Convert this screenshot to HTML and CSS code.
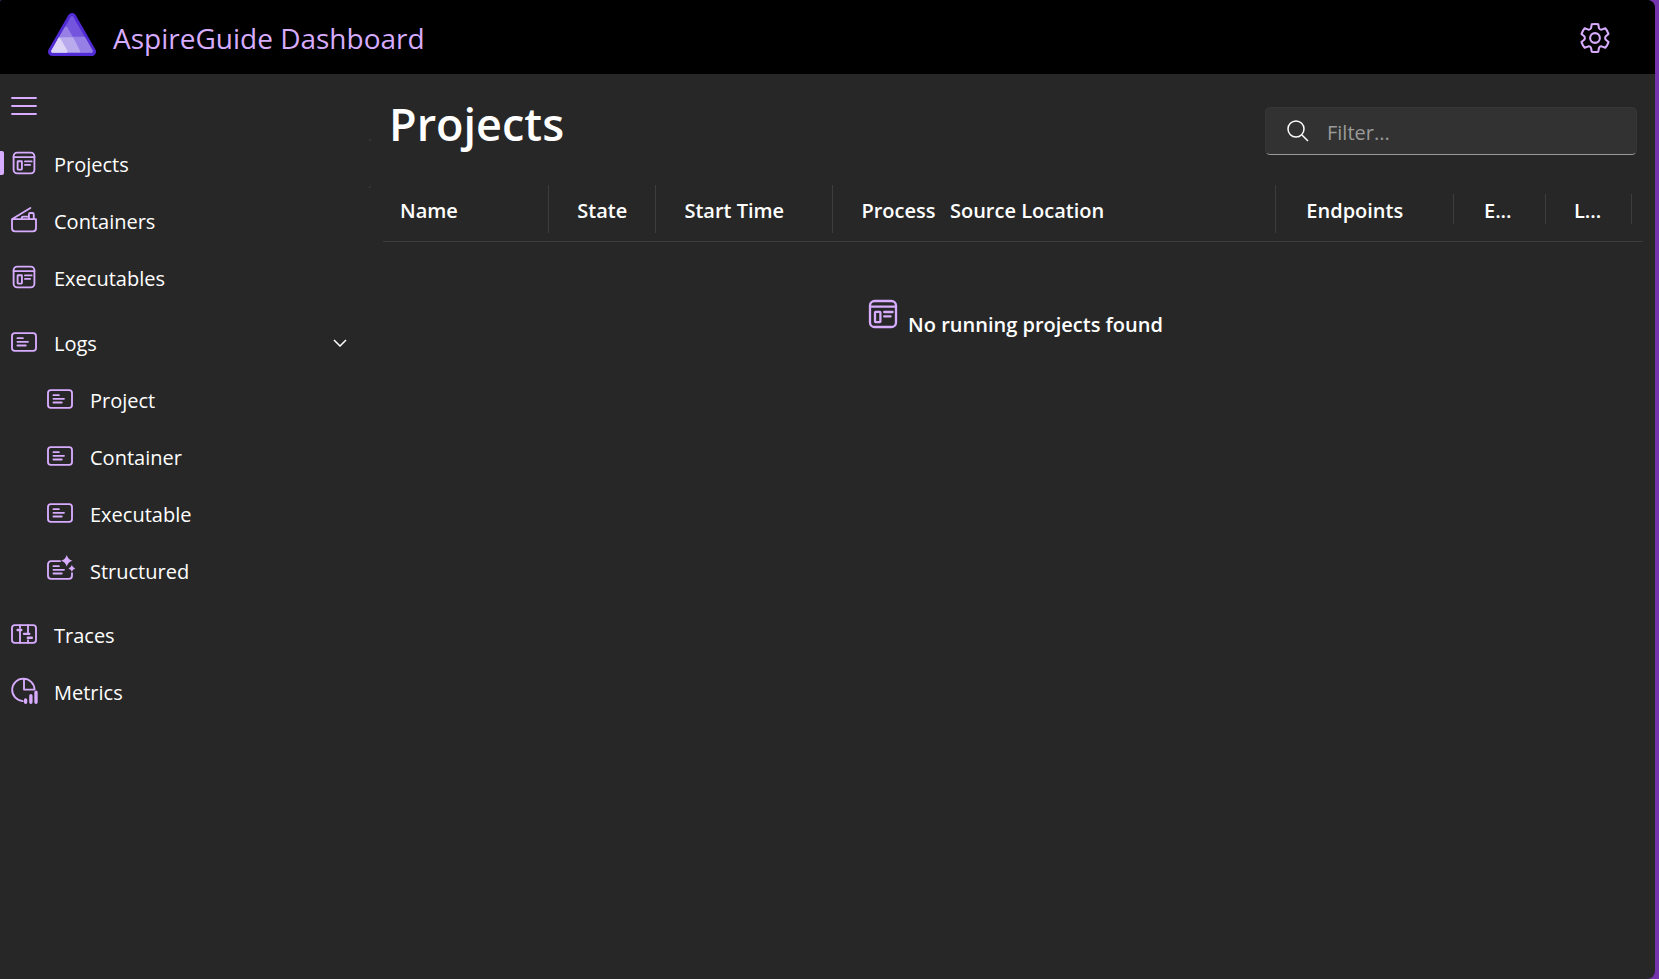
FILE: index.html
```html
<!DOCTYPE html>
<html lang="en">
<head>
<meta charset="utf-8">
<title>AspireGuide Dashboard</title>
<link rel="stylesheet" href="styles.css">
</head>
<body>
<svg class="sprite" aria-hidden="true">
  <symbol id="i-app" viewBox="0 0 20 20"><rect x="3.5" y="3.5" width="13" height="13" rx="2.3"/><path d="M3.5 6.3h13M10.6 9h4.2M10.6 11.2h3.2"/><rect x="6" y="8.9" width="2.7" height="5.2" rx=".3"/></symbol>
  <symbol id="i-box" viewBox="0 0 20 20"><path d="M2.5 9.5h15v5.7a1.9 1.9 0 0 1-1.9 1.9H4.4a1.9 1.9 0 0 1-1.9-1.9zM2.9 9.2 14 2.5M13.1 9.5V6.4q0-.8.8-.8h1.4q.8 0 .8.8v3.1M8.6 9.5V8.7q0-.8.8-.8h3.7"/></symbol>
  <symbol id="i-log" viewBox="0 0 20 20"><rect x="2.5" y="4.5" width="15" height="11" rx="1.8"/><path d="M5.9 7.6h3.4M5.9 9.9h6.6M5.9 12.2h5.2"/></symbol>
  <symbol id="i-spark" viewBox="0 0 20 20"><path d="M10 4.5H4.4a1.9 1.9 0 0 0-1.9 1.9v7.2a1.9 1.9 0 0 0 1.9 1.9h11.2a1.9 1.9 0 0 0 1.9-1.9V12M5.9 7.6h3.4M5.9 9.9h6.6M5.9 12.2h5.2"/><path class="solid" d="M14.2.6Q15 3.4 17.8 4.2 15 5 14.2 7.8 13.4 5 10.6 4.2 13.4 3.4 14.2.6zM17.4 6.9Q17.9 8.5 19.5 9 17.9 9.5 17.4 11.1 16.9 9.5 15.3 9 16.9 8.5 17.4 6.9z"/></symbol>
  <symbol id="i-trace" viewBox="0 0 20 20"><rect x="2.5" y="4.5" width="15" height="11" rx="1.8"/><path d="M7.5 4.5v1.8M7.5 8v7.5M12.5 4.5V9M12.5 13.8v1.7"/><path class="bar" d="M6 7.5h2.3M10 9.9h3.3M12.4 12.3h2.5"/></symbol>
  <symbol id="i-metric" viewBox="0 0 20 20"><path d="M9.2 16.3A7 7 0 1 1 16.6 9.1M10 2.4v6.7h6.6"/><path class="thick" d="M11 15.6v1.5M14.3 13v4.1M17.5 10.8v6.3"/></symbol>
  <symbol id="i-menu" viewBox="0 0 20 20"><path d="M2.5 5h15M2.5 10h15M2.5 15h15"/></symbol>
  <symbol id="i-gear" viewBox="0 0 20 20"><circle cx="10" cy="10" r="2.7"/><path d="M8.18 2.41Q10 2.1 11.82 2.41L12.2 4.5Q12.7 5.5 13.63 5.35L15.72 4.58Q16.9 5.9 17.5 7.73L15.84 9.18Q15.4 10 15.84 10.82L17.5 12.27Q16.9 14.1 15.72 15.42L13.63 14.65Q12.7 14.5 12.2 15.5L11.82 17.59Q10 17.9 8.18 17.59L7.8 15.5Q7.3 14.5 6.37 14.65L4.28 15.42Q3.1 14.1 2.5 12.27L4.16 10.82Q4.6 10 4.16 9.18L2.5 7.73Q3.1 5.9 4.28 4.58L6.37 5.35Q7.3 5.5 7.8 4.5z"/></symbol>
</svg>
<div class="window">
  <header class="topbar">
    <a class="brand" href="#">
      <svg class="logo" viewBox="0 0 144 129" aria-hidden="true">
        <path d="M72 13 131 116H13z" fill="#512bd4" stroke="#512bd4" stroke-width="26" stroke-linejoin="round"/>
        <path d="M72 14 130 115H14z" fill="#7455dd" stroke="#7455dd" stroke-width="9" stroke-linejoin="round"/>
        <path d="M108 76 130 115H60V76z" fill="#9780e5" stroke="#9780e5" stroke-width="9" stroke-linejoin="round"/>
        <path d="M54 45 94 115H14z" fill="#9780e5" stroke="#9780e5" stroke-width="9" stroke-linejoin="round"/>
        <path d="M33 75H74L94 115H14z" fill="#b9aaee" stroke="#b9aaee" stroke-width="5" stroke-linejoin="round"/>
        <path d="M34 80 54 115H14z" fill="#dcd5f6" stroke="#dcd5f6" stroke-width="9" stroke-linejoin="round"/>
      </svg>
      <span>AspireGuide Dashboard</span>
    </a>
    <button class="icon-button" type="button" aria-label="Settings"><svg class="icon icon-gear"><use href="#i-gear"/></svg></button>
  </header>
  <div class="layout">
    <nav class="sidebar" aria-label="Main">
      <button class="menu-button" type="button" aria-label="Toggle navigation"><svg class="icon"><use href="#i-menu"/></svg></button>
      <ul class="nav">
        <li class="current"><a href="#" aria-current="page"><svg class="icon"><use href="#i-app"/></svg>Projects</a></li>
        <li><a href="#"><svg class="icon"><use href="#i-box"/></svg>Containers</a></li>
        <li><a href="#"><svg class="icon"><use href="#i-app"/></svg>Executables</a></li>
        <li class="group">
          <button type="button" aria-expanded="true"><svg class="icon"><use href="#i-log"/></svg>Logs<svg class="chevron" viewBox="0 0 14 8"><path d="M1 1l6 6 6-6"/></svg></button>
          <ul class="nav subnav">
            <li><a href="#"><svg class="icon"><use href="#i-log"/></svg>Project</a></li>
            <li><a href="#"><svg class="icon"><use href="#i-log"/></svg>Container</a></li>
            <li><a href="#"><svg class="icon"><use href="#i-log"/></svg>Executable</a></li>
            <li><a href="#"><svg class="icon"><use href="#i-spark"/></svg>Structured</a></li>
          </ul>
        </li>
        <li><a href="#"><svg class="icon"><use href="#i-trace"/></svg>Traces</a></li>
        <li><a href="#"><svg class="icon"><use href="#i-metric"/></svg>Metrics</a></li>
      </ul>
    </nav>
    <main class="content">
      <div class="toolbar">
        <h1>Projects</h1>
        <label class="search">
          <svg class="search-icon" viewBox="0 0 24 24" aria-hidden="true"><circle cx="10" cy="10" r="8"/><path d="M16 16l6 6"/></svg>
          <input type="search" placeholder="Filter..." aria-label="Filter">
        </label>
      </div>
      <table>
        <colgroup><col class="c-name"><col class="c-state"><col class="c-start"><col class="c-process"><col class="c-source"><col class="c-endpoints"><col class="c-env"><col class="c-logs"></colgroup>
        <thead>
          <tr>
            <th scope="col" class="first"><div>Name</div></th>
            <th scope="col"><div>State</div></th>
            <th scope="col"><div>Start Time</div></th>
            <th scope="col" class="plain"><div>Process</div></th>
            <th scope="col" class="first"><div>Source Location</div></th>
            <th scope="col" class="short wide"><div>Endpoints</div></th>
            <th scope="col" class="short wide"><div>E...</div></th>
            <th scope="col" class="short last"><div>L...</div></th>
          </tr>
        </thead>
        <tbody>
          <tr><td colspan="8"><div class="empty"><svg class="icon icon-large"><use href="#i-app"/></svg><span>No running projects found</span></div></td></tr>
        </tbody>
      </table>
    </main>
  </div>
</div>
</body>
</html>
```
FILE: styles.css
```css
* { box-sizing: border-box; }
body {
  margin: 0;
  background: #7334ad;
  color: #fff;
  font-family: "Open Sans", "Noto Sans", sans-serif;
  font-size: 20px;
  line-height: 28px;
}
a { color: inherit; text-decoration: none; }
button { border: 0; background: none; color: inherit; font: inherit; cursor: pointer; padding: 0; }
ul { list-style: none; margin: 0; padding: 0; }
.sprite { position: absolute; width: 0; height: 0; }
.icon {
  width: 32px;
  height: 32px;
  flex: none;
  display: block;
  fill: none;
  stroke: #d7acff;
  stroke-width: 1.15;
  stroke-linecap: round;
  stroke-linejoin: round;
}
.solid { fill: #d7acff; stroke: none; }
.bar { stroke-width: 1.5; }
.thick { stroke-width: 2.1; }

.window {
  display: flex;
  flex-direction: column;
  min-height: 100vh;
  margin-right: 4px;
  border-radius: 2px 8px 8px 0;
  overflow: hidden;
  background: #272727;
}
.topbar {
  display: flex;
  align-items: center;
  justify-content: space-between;
  height: 74px;
  padding: 0 42px 0 48px;
  background: #000;
}
.brand {
  display: flex;
  align-items: center;
  gap: 17px;
  color: #d7acff;
  font-size: 28px;
  line-height: 40px;
}
.brand span { padding-top: 2px; }
.logo { width: 48px; height: 43px; margin-bottom: 6px; }
.icon-button { padding-top: 2px; }
.icon-gear { width: 36px; height: 36px; }

.layout { display: flex; flex: 1; }
.sidebar { flex: none; width: 371px; padding-top: 16px; }
.menu-button { display: block; margin: 0 0 17px 8px; }
.nav { display: flex; flex-direction: column; gap: 8px; }
.nav a, .group > button {
  position: relative;
  display: flex;
  align-items: center;
  gap: 14px;
  width: 100%;
  height: 49px;
  padding: 2px 24px 0 8px;
  text-align: left;
}
.nav .icon { margin-bottom: 4px; }
.group { margin: 8px 0 7px; }
.subnav { margin-top: 8px; }
.subnav a { padding-left: 44px; }
.current { background: #353535; }
.current a { background: #272727; border-radius: 0 5px 5px 0; }
.current a::before {
  content: "";
  position: absolute;
  left: 0;
  top: 12px;
  width: 4px;
  height: 24px;
  border-radius: 0 2px 2px 0;
  background: #d7acff;
}
.chevron { width: 14px; height: 8px; margin: 0 0 2px auto; fill: none; stroke: #fff; stroke-width: 1.5; }

.content { flex: 1; min-width: 0; padding: 0 12px; }
.toolbar {
  display: flex;
  align-items: flex-start;
  justify-content: space-between;
  height: 103px;
  padding: 20px 6px 0;
}
h1 { margin: 0; font-size: 45px; line-height: 60px; font-weight: 600; }
.search {
  display: flex;
  align-items: center;
  gap: 17px;
  width: 372px;
  height: 48px;
  margin-top: 13px;
  padding: 0 20px;
  border: 1px solid #363636;
  border-bottom-color: #9a9a9a;
  border-radius: 5px;
  background: #323232;
}
.search-icon { width: 24px; height: 24px; flex: none; fill: none; stroke: #fff; stroke-width: 1.5; }
.search input { flex: 1; min-width: 0; border: 0; outline: 0; padding: 3px 0 0; background: none; color: #fff; font: inherit; }
.search input::placeholder { color: #9a9a9a; opacity: 1; }

table { width: 100%; table-layout: fixed; border-collapse: collapse; }
.c-name { width: 13.2%; }
.c-state { width: 8.5%; }
.c-start { width: 14.05%; }
.c-process { width: 7.9%; }
.c-source { width: 27.25%; }
.c-endpoints { width: 14.1%; }
.c-env { width: 7.3%; }
.c-logs { width: 7.7%; }
th { padding: 8px 0; border-bottom: 1px solid #3d3d3d; font-weight: 600; text-align: left; white-space: nowrap; }
th div { height: 48px; line-height: 51px; padding-left: 28px; border-right: 1px solid #3d3d3d; }
th.first div { padding-left: 17px; }
th.plain div { border-right: 0; }
th.short div { height: 30px; line-height: 33px; }
th.wide div { padding-left: 30px; }
th.last { padding-right: 11px; }
td { padding: 52px 0 0; }
.empty { display: flex; justify-content: center; align-items: flex-start; gap: 5px; font-weight: 600; }
.empty span { padding-top: 17px; }
.icon-large { width: 40px; height: 40px; }
```
